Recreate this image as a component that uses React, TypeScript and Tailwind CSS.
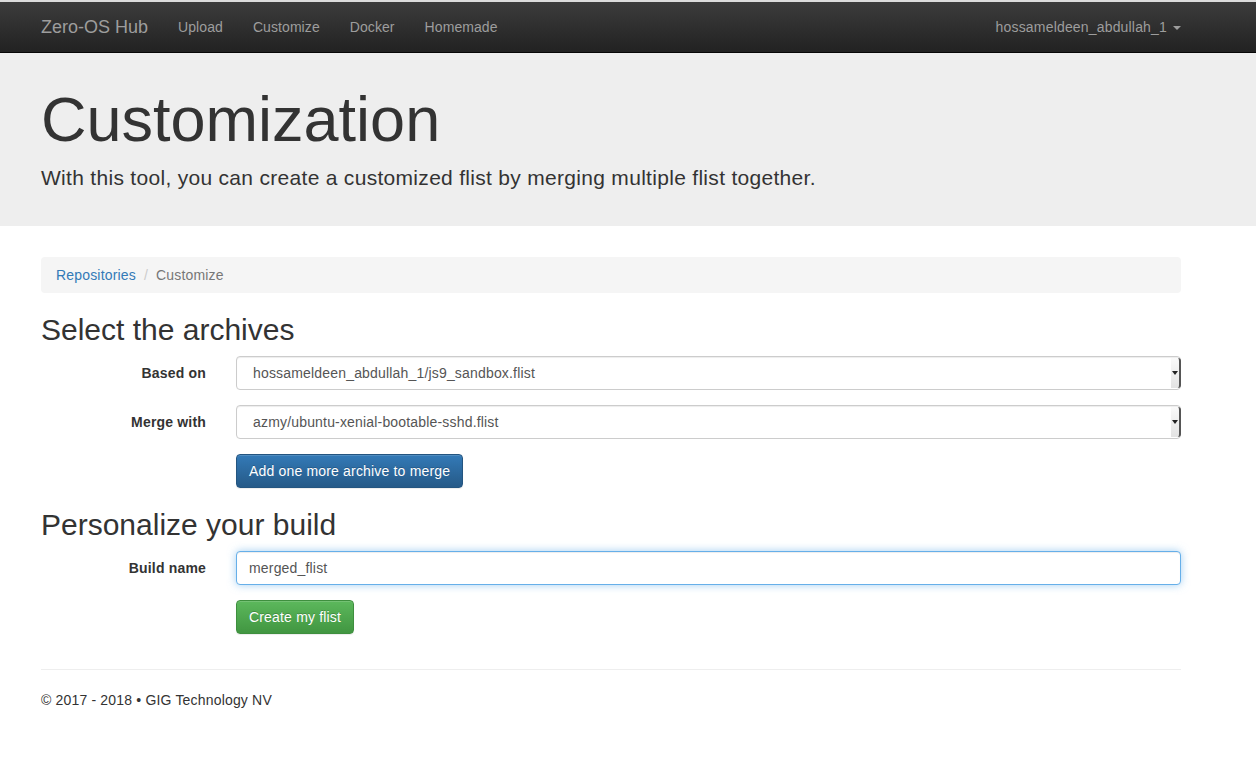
import React from "react";

const font = { fontFamily: '"Liberation Sans", Arial, Helvetica, sans-serif' };

const SelectBox = ({ value }: { value: string }) => (
  <div className="relative h-[34px] w-[945px] rounded-[4px] border border-[#ccc] bg-white shadow-[inset_0_1px_1px_rgba(0,0,0,0.075)]">
    <div className="flex h-full items-center pl-[16px] text-[14px] text-[#555]">{value}</div>
    <div className="absolute right-[-1px] top-[1px] bottom-[1px] flex w-[10px] items-center justify-center rounded-r-[3px] border-r-2 border-[#555] bg-gradient-to-b from-[#fafafa] to-[#e3e3e3]">
      <span className="h-0 w-0 border-x-[3px] border-t-[4px] border-x-transparent border-t-[#222]" />
    </div>
  </div>
);

const FormRow = ({ label, children }: { label: string; children: React.ReactNode }) => (
  <div className="flex gap-[30px]">
    <div className="w-[165px] pt-[7px] text-right text-[14px] font-bold leading-[20px] text-[#333]">{label}</div>
    <div>{children}</div>
  </div>
);

export default function App() {
  const links = ["Upload", "Customize", "Docker", "Homemade"];

  return (
    <div className="min-h-[764px] bg-white tracking-[0.011em] text-[#333]" style={font}>
      <div className="h-[2px] bg-[#dcdcdc]" />
      <nav className="h-[51px] border-b border-[#080808] bg-gradient-to-b from-[#3c3c3c] to-[#222]">
        <div className="ml-[41px] flex h-[50px] w-[1140px] items-center justify-between">
          <div className="flex items-center">
            <span className="pr-[15px] text-[18px] leading-[20px] tracking-normal text-[#9d9d9d]">Zero-OS Hub</span>
            {links.map((l) => (
              <span key={l} className="px-[15px] text-[14px] leading-[20px] tracking-[0.08px] text-[#9d9d9d]">
                {l}
              </span>
            ))}
          </div>
          <div className="flex items-center text-[14px] leading-[20px] text-[#9d9d9d]">
            hossameldeen_abdullah_1
            <span className="ml-[6px] mt-[1px] h-0 w-0 border-x-[4px] border-t-[4px] border-x-transparent border-t-[#9d9d9d]" />
          </div>
        </div>
      </nav>

      <section className="h-[173px] bg-[#eee]">
        <div className="ml-[41px] w-[1140px] pt-[32px]">
          <h1 className="mb-[9px] text-[63px] leading-[69px] tracking-normal text-[#333]">Customization</h1>
          <p className="text-[21px] leading-[30px] tracking-[0.3px] text-[#333]">
            With this tool, you can create a customized flist by merging multiple flist together.
          </p>
        </div>
      </section>

      <main className="ml-[41px] w-[1140px] pt-[31px]">
        <div className="flex h-[36px] items-center rounded-[4px] bg-[#f5f5f5] px-[15px] text-[14px]">
          <span className="text-[#337ab7]">Repositories</span>
          <span className="px-[8px] text-[#ccc]">/</span>
          <span className="text-[#777]">Customize</span>
        </div>

        <h2 className="mt-[20px] mb-[10px] text-[30px] leading-[33px] tracking-normal text-[#333]">Select the archives</h2>

        <div className="flex flex-col gap-[15px]">
          <FormRow label="Based on">
            <SelectBox value="hossameldeen_abdullah_1/js9_sandbox.flist" />
          </FormRow>
          <FormRow label="Merge with">
            <SelectBox value="azmy/ubuntu-xenial-bootable-sshd.flist" />
          </FormRow>
          <FormRow label="">
            <button className="h-[34px] rounded-[4px] border border-[#245580] bg-gradient-to-b from-[#337ab7] to-[#265a88] px-[12px] text-[14px] text-white shadow-[inset_0_1px_0_rgba(255,255,255,0.15),0_1px_1px_rgba(0,0,0,0.075)] [text-shadow:0_-1px_0_rgba(0,0,0,0.2)]">
              Add one more archive to merge
            </button>
          </FormRow>
        </div>

        <h2 className="mt-[20px] mb-[10px] text-[30px] leading-[33px] tracking-normal text-[#333]">Personalize your build</h2>

        <div className="flex flex-col gap-[15px]">
          <FormRow label="Build name">
            <div className="flex h-[34px] w-[945px] items-center rounded-[4px] border border-[#66afe9] bg-white px-[12px] text-[14px] text-[#555] shadow-[inset_0_1px_1px_rgba(0,0,0,0.075),0_0_8px_rgba(102,175,233,0.6)]">
              merged_flist
            </div>
          </FormRow>
          <FormRow label="">
            <button className="h-[34px] rounded-[4px] border border-[#3e8f3e] bg-gradient-to-b from-[#5cb85c] to-[#419641] px-[12px] text-[14px] text-white shadow-[inset_0_1px_0_rgba(255,255,255,0.15),0_1px_1px_rgba(0,0,0,0.075)] [text-shadow:0_-1px_0_rgba(0,0,0,0.2)]">
              Create my flist
            </button>
          </FormRow>
        </div>

        <hr className="mt-[35px] border-t border-[#eee]" />
        <footer className="pt-[20px] text-[14px] leading-[20px] text-[#333]">© 2017 - 2018 • GIG Technology NV</footer>
      </main>
    </div>
  );
}
